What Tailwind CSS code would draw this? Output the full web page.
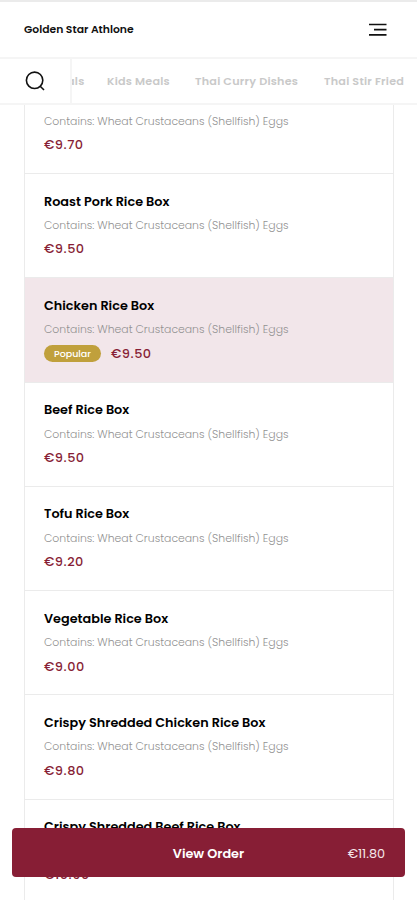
<!DOCTYPE html>
<html lang="en">
<head>
<meta charset="utf-8">
<title>Golden Star Athlone</title>
<script src="https://cdn.jsdelivr.net/npm/@tailwindcss/browser@4"></script>
</head>
<body class="bg-white font-['Poppins','Inter',sans-serif] text-black">
<div class="relative flex h-[900px] w-[417px] flex-col overflow-hidden">
  <header class="relative z-10 shrink-0 bg-white">
    <div class="flex h-[59px] items-center justify-between border-t-2 border-b-2 border-t-[#ebebeb] border-b-[#f5f5f5] pr-[30px] pl-6">
      <h1 class="mt-px text-[10.8px] font-semibold whitespace-nowrap text-[#111]">Golden Star Athlone</h1>
      <svg class="h-[14px] w-[18px]" viewBox="0 0 18 14" fill="none" stroke="#111" stroke-width="1.7"><path d="M0 1.5h17.5M5 6.7h12.5M0 11.8h17.5"/></svg>
    </div>
    <nav class="flex h-[46px] items-stretch overflow-hidden border-b-2 border-[#f5f5f5]">
      <div class="z-10 flex w-[72px] shrink-0 items-center border-r-2 border-[#f5f5f5] bg-white pl-[25px]">
        <svg class="h-5 w-5" viewBox="0 0 20 20" fill="none" stroke="#111" stroke-width="1.6"><circle cx="9.6" cy="9.3" r="8.2"/><path d="M15.2 15.2L19 19"/></svg>
      </div>
      <div class="-ml-[5px] flex items-center gap-6 text-[11.2px] font-semibold tracking-[0.23px] whitespace-nowrap text-[#c9c9c9]">
        <span class="w-[16px]">als</span><span class="w-[64px]">Kids Meals</span><span class="w-[105px]">Thai Curry Dishes</span><span>Thai Stir Fried</span>
      </div>
    </nav>
  </header>
  <main id="menu" class="-mt-[35.3px] ml-6 w-[370px] shrink-0 border-x border-[#ebebeb]"></main>
  <button class="absolute top-[828px] left-[12px] z-20 grid h-[49px] w-[393px] grid-cols-[1fr_auto_1fr] items-center rounded-[4px] bg-[#871e35] px-5 text-[12.8px] text-white">
    <span class="col-start-2 mt-[2px] font-semibold">View Order</span>
    <span class="mt-[2px] justify-self-end text-[#f5e6ea]">€11.80</span>
  </button>
</div>
<script>
const dishes = [
  ['Char Siu Rice Box', '€9.70'], ['Roast Pork Rice Box', '€9.50'], ['Chicken Rice Box', '€9.50', true],
  ['Beef Rice Box', '€9.50'], ['Tofu Rice Box', '€9.20'], ['Vegetable Rice Box', '€9.00'],
  ['Crispy Shredded Chicken Rice Box', '€9.80'], ['Crispy Shredded Beef Rice Box', '€10.90']
];
document.getElementById('menu').innerHTML = dishes.map(([name, price, popular]) => `
  <article class="h-[104.3px] border-b border-[#ebebeb] pt-[17.5px] pl-[19px] whitespace-nowrap ${popular ? 'bg-[#f2e6ea]' : ''}">
    <h2 class="h-5 text-[12.8px] leading-5 font-semibold">${name}</h2>
    <p class="mt-[6.5px] h-4 text-[10.87px] leading-4 font-light text-[#929292]">Contains: Wheat Crustaceans (Shellfish) Eggs</p>
    <div class="mt-[5.5px] flex h-5 items-center text-[12.9px] font-medium text-[#871e35]">${popular ? '<span class="mr-[10px] flex h-[17px] w-[57px] items-center justify-center rounded-full bg-[#c0a03c] text-[9.5px] text-white">Popular</span>' : ''}<span class="-mt-px tracking-[0.5px]">${price}</span></div>
  </article>`).join('');
</script>
</body>
</html>
